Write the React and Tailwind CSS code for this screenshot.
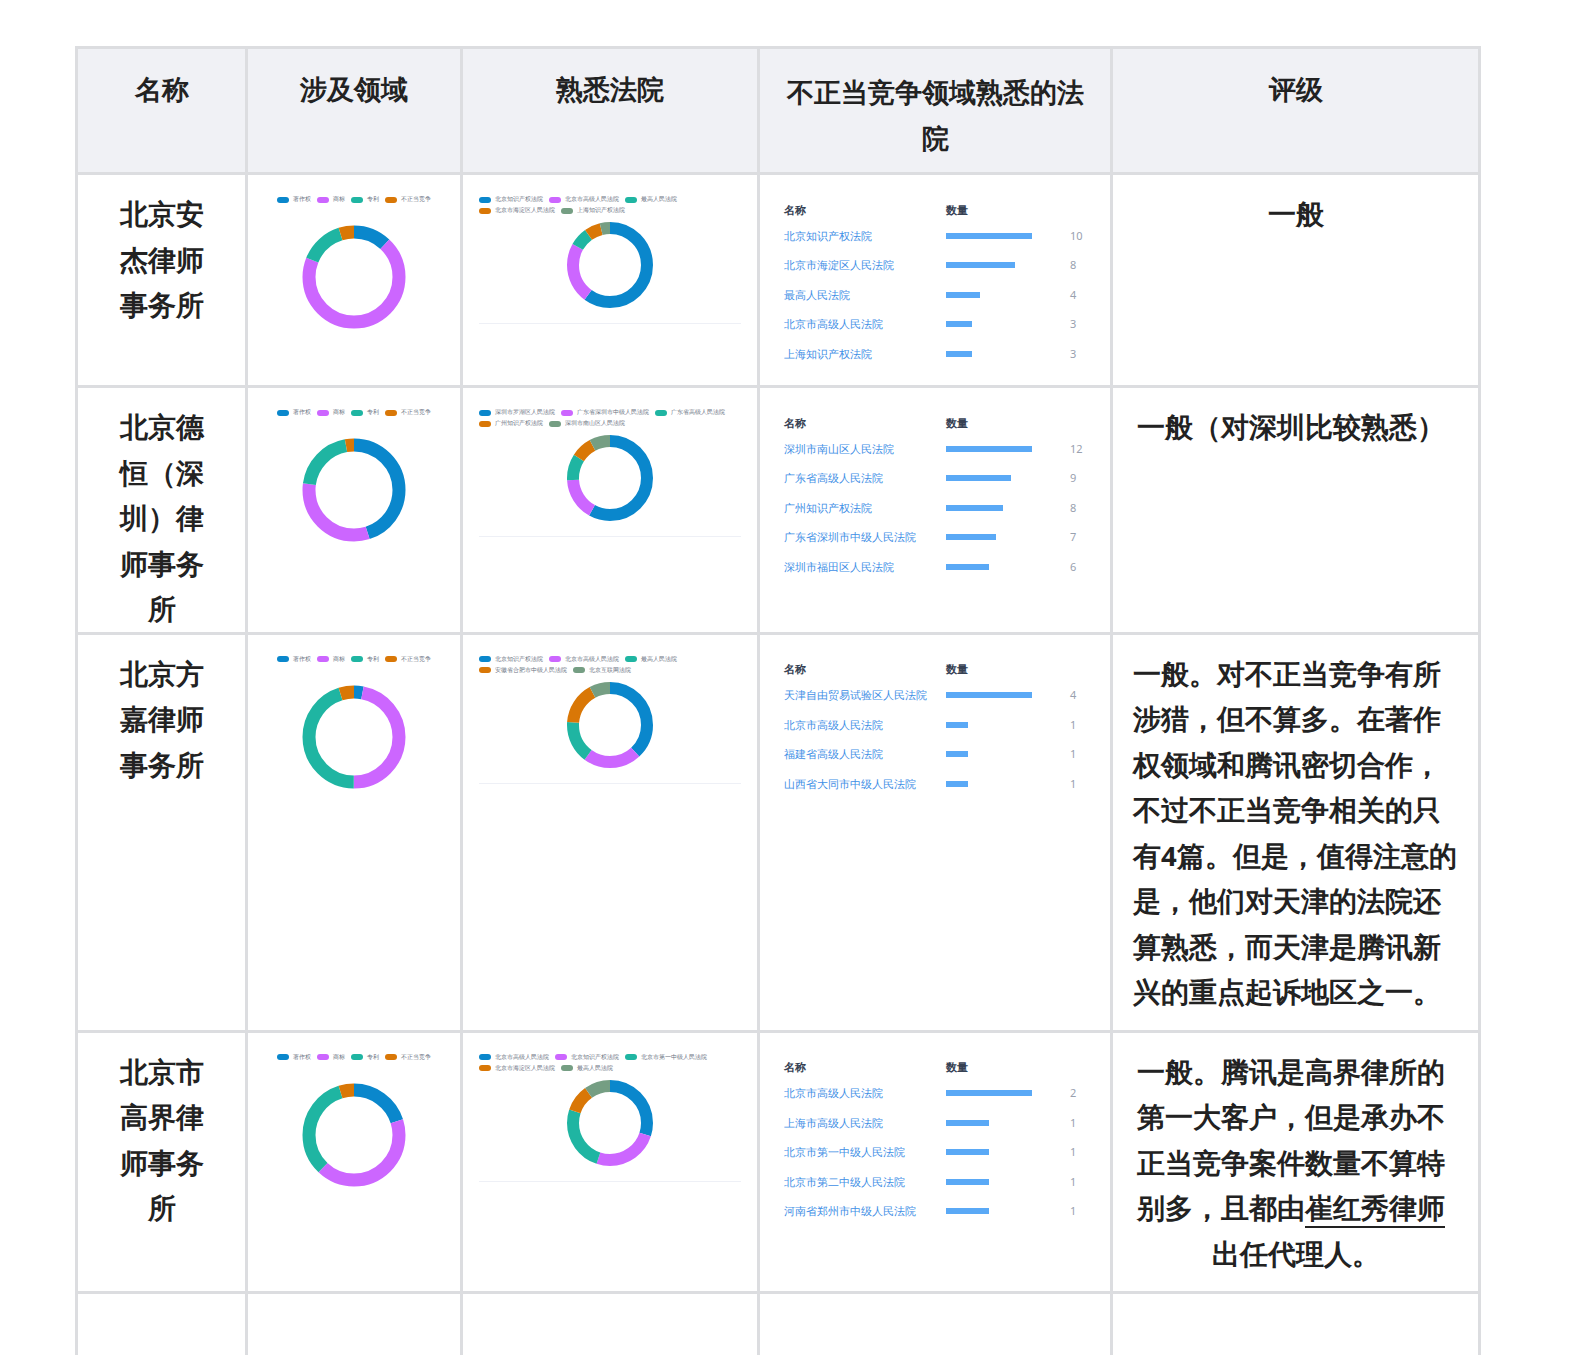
const C = { b: "#0a87cc", p: "#cc66ff", t: "#1fb5a2", o: "#d97706", g: "#759e83" };

function Donut({ size, r, w, segs }) {
  const circ = 2 * Math.PI * r;
  let acc = 0;
  return (
    <svg width={size} height={size} viewBox={`0 0 ${size} ${size}`}>
      <g transform={`rotate(-90 ${size / 2} ${size / 2})`}>
        {segs.map(([c, f], i) => {
          const el = (
            <circle key={i} cx={size / 2} cy={size / 2} r={r} fill="none" stroke={c} strokeWidth={w}
              strokeDasharray={`${f * circ} ${circ}`} strokeDashoffset={-acc * circ} />
          );
          acc += f;
          return el;
        })}
      </g>
    </svg>
  );
}

function Legend({ items }) {
  return (
    <div className="flex flex-wrap gap-x-1.5 gap-y-0.5 text-[6px] font-normal text-gray-500 leading-[9px]">
      {items.map(([c, n]) => (
        <span key={n} className="flex items-center gap-1">
          <span className="inline-block w-3 h-[6px] rounded-sm" style={{ background: c }} />
          {n}
        </span>
      ))}
    </div>
  );
}

const fieldItems = [[C.b, "著作权"], [C.p, "商标"], [C.t, "专利"], [C.o, "不正当竞争"]];

function FieldCell({ segs }) {
  return (
    <td className="border-[3px] border-[#dcdde0] align-top leading-normal">
      <div className="flex flex-col items-center pt-5">
        <Legend items={fieldItems} />
        <div className="mt-5"><Donut size={106} r={45} w={13} segs={segs} /></div>
      </div>
    </td>
  );
}

function CourtCell({ names, segs }) {
  const cols = [C.b, C.p, C.t, C.o, C.g];
  return (
    <td className="border-[3px] border-[#dcdde0] align-top px-4 leading-normal">
      <div className="flex flex-col items-center border-b border-[#eef0f6] pb-3 pt-5">
        <div className="self-start"><Legend items={names.map((n, i) => [cols[i], n])} /></div>
        <div className="mt-1"><Donut size={92} r={37} w={12} segs={segs} /></div>
      </div>
    </td>
  );
}

function BarCell({ rows, max }) {
  return (
    <td className="border-[3px] border-[#dcdde0] align-top px-6 pt-6 leading-normal font-normal">
      <div className="text-[11px]">
        <div className="flex font-bold text-gray-700 h-[22px] items-center"><span className="w-[162px]">名称</span><span>数量</span></div>
        {rows.map(([n, v]) => (
          <div key={n} className="flex items-center h-[29.5px]">
            <span className="w-[162px] text-[#3f8fe6] truncate pr-2">{n}</span>
            <span className="w-[124px]"><span className="block h-[6px] bg-[#5aa9f6]" style={{ width: (v / max) * 86 }} /></span>
            <span className="text-gray-400">{v}</span>
          </div>
        ))}
      </div>
    </td>
  );
}

const bd = "border-[3px] border-[#dcdde0]";

export default function App() {
  return (
    <div className="bg-white min-h-[1355px] pt-[46px] pl-[75px] font-['Noto_Sans_CJK_SC',sans-serif] text-[#222] [text-spacing-trim:space-all]">
      <table className="border-collapse w-[1406px] table-fixed">
        <colgroup>
          <col className="w-[170px]" /><col className="w-[215px]" /><col className="w-[297px]" /><col className="w-[353px]" /><col />
        </colgroup>
        <thead>
          <tr className="bg-[#f0f1f5] text-[27px] font-bold h-[126px]">
            {["名称", "涉及领域", "熟悉法院"].map(h => <th key={h} className={`${bd} align-top pt-5`}>{h}</th>)}
            <th className={`${bd} align-top pt-5 px-5 leading-[46px]`}>不正当竞争领域熟悉的法院</th>
            <th className={`${bd} align-top pt-5`}>评级</th>
          </tr>
        </thead>
        <tbody className="text-[27.5px] font-bold leading-[45.5px]">
          <tr className="h-[213px]">
            <td className={`${bd} align-top text-center px-7 pt-4`}>北京安杰律师事务所</td>
            <FieldCell segs={[[C.b, 0.12], [C.p, 0.69], [C.t, 0.14], [C.o, 0.05]]} />
            <CourtCell names={["北京知识产权法院", "北京市高级人民法院", "最高人民法院", "北京市海淀区人民法院", "上海知识产权法院"]}
              segs={[[C.b, 0.6], [C.p, 0.23], [C.t, 0.07], [C.o, 0.06], [C.g, 0.04]]} />
            <BarCell max={10} rows={[["北京知识产权法院", 10], ["北京市海淀区人民法院", 8], ["最高人民法院", 4], ["北京市高级人民法院", 3], ["上海知识产权法院", 3]]} />
            <td className={`${bd} align-top text-center pt-4`}>一般</td>
          </tr>
          <tr className="h-[216px]">
            <td className={`${bd} align-top text-center px-7 pt-4`}>北京德恒（深圳）律师事务所</td>
            <FieldCell segs={[[C.b, 0.45], [C.p, 0.32], [C.t, 0.2], [C.o, 0.03]]} />
            <CourtCell names={["深圳市罗湖区人民法院", "广东省深圳市中级人民法院", "广东省高级人民法院", "广州知识产权法院", "深圳市南山区人民法院"]}
              segs={[[C.b, 0.58], [C.p, 0.16], [C.t, 0.1], [C.o, 0.08], [C.g, 0.08]]} />
            <BarCell max={12} rows={[["深圳市南山区人民法院", 12], ["广东省高级人民法院", 9], ["广州知识产权法院", 8], ["广东省深圳市中级人民法院", 7], ["深圳市福田区人民法院", 6]]} />
            <td className={`${bd} align-top pt-4 px-6`}>一般（对深圳比较熟悉）</td>
          </tr>
          <tr className="h-[398px]">
            <td className={`${bd} align-top text-center px-7 pt-4`}>北京方嘉律师事务所</td>
            <FieldCell segs={[[C.b, 0.03], [C.p, 0.47], [C.t, 0.45], [C.o, 0.05]]} />
            <CourtCell names={["北京知识产权法院", "北京市高级人民法院", "最高人民法院", "安徽省合肥市中级人民法院", "北京互联网法院"]}
              segs={[[C.b, 0.38], [C.p, 0.22], [C.t, 0.16], [C.o, 0.16], [C.g, 0.08]]} />
            <BarCell max={4} rows={[["天津自由贸易试验区人民法院", 4], ["北京市高级人民法院", 1], ["福建省高级人民法院", 1], ["山西省大同市中级人民法院", 1]]} />
            <td className={`${bd} align-top pt-4 px-5`}>一般。对不正当竞争有所涉猎，但不算多。在著作权领域和腾讯密切合作，不过不正当竞争相关的只有4篇。但是，值得注意的是，他们对天津的法院还算熟悉，而天津是腾讯新兴的重点起诉地区之一。</td>
          </tr>
          <tr className="h-[261px]">
            <td className={`${bd} align-top text-center px-7 pt-4`}>北京市高界律师事务所</td>
            <FieldCell segs={[[C.b, 0.2], [C.p, 0.42], [C.t, 0.33], [C.o, 0.05]]} />
            <CourtCell names={["北京市高级人民法院", "北京知识产权法院", "北京市第一中级人民法院", "北京市海淀区人民法院", "最高人民法院"]}
              segs={[[C.b, 0.3], [C.p, 0.25], [C.t, 0.25], [C.o, 0.1], [C.g, 0.1]]} />
            <BarCell max={2} rows={[["北京市高级人民法院", 2], ["上海市高级人民法院", 1], ["北京市第一中级人民法院", 1], ["北京市第二中级人民法院", 1], ["河南省郑州市中级人民法院", 1]]} />
            <td className={`${bd} align-top pt-4 px-6 text-center`}>
              <div className="text-left">一般。腾讯是高界律所的第一大客户，但是承办不正当竞争案件数量不算特别多，且都由<span className="border-b-2 border-[#222]">崔红秀律师</span></div>
              出任代理人。
            </td>
          </tr>
          <tr className="h-[90px]">
            {[0, 1, 2, 3, 4].map(i => <td key={i} className="border-x-[3px] border-t-[3px] border-[#dcdde0]" />)}
          </tr>
        </tbody>
      </table>
    </div>
  );
}
